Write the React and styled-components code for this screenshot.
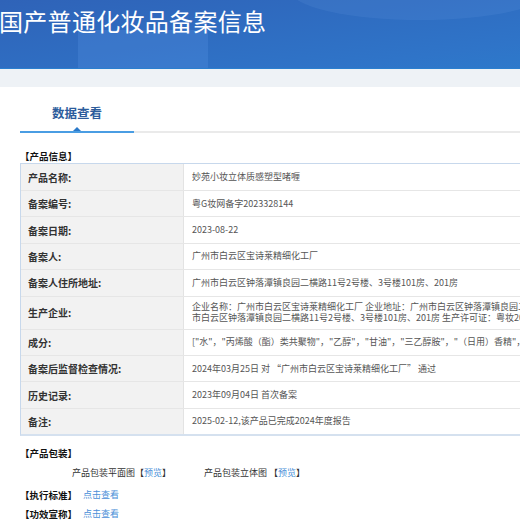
import React from "react";
import styled, { createGlobalStyle } from "styled-components";

const GlobalStyle = createGlobalStyle`
  html, body {
    margin: 0;
    padding: 0;
    background: #ffffff;
    overflow: hidden;
  }
  body {
    font-family: "Noto Sans CJK SC", "Noto Sans", "Liberation Sans", sans-serif;
  }
`;

const rows = [
  { label: "产品名称:", value: "妙苑小妆立体质感塑型啫喱" },
  { label: "备案编号:", value: "粤G妆网备字2023328144" },
  { label: "备案日期:", value: "2023-08-22" },
  { label: "备案人:", value: "广州市白云区宝诗莱精细化工厂" },
  { label: "备案人住所地址:", value: "广州市白云区钟落潭镇良园二横路11号2号楼、3号楼101房、201房" },
  {
    label: "生产企业:",
    lines: [
      "企业名称：广州市白云区宝诗莱精细化工厂 企业地址：广州市白云区钟落潭镇良园二横路11号2号楼、3号楼101房、201房 生产地址：广州",
      "市白云区钟落潭镇良园二横路11号2号楼、3号楼101房、201房 生产许可证：粤妆20160226",
    ],
  },
  {
    label: "成分:",
    value: "[\"水\"，\"丙烯酸（酯）类共聚物\"，\"乙醇\"，\"甘油\"，\"三乙醇胺\"，\"（日用）香精\"，\"DMDM乙内酰脲\"]",
  },
  { label: "备案后监督检查情况:", value: "2024年03月25日 对 “广州市白云区宝诗莱精细化工厂” 通过" },
  { label: "历史记录:", value: "2023年09月04日 首次备案" },
  { label: "备注:", value: "2025-02-12,该产品已完成2024年度报告" },
];

export default function App() {
  return (
    <Page>
      <GlobalStyle />
      <Banner>
        <Title>国产普通化妆品备案信息</Title>
      </Banner>
      <GrayBand />
      <Content>
        <TabBar>
          <Tab>数据查看</Tab>
        </TabBar>

        <SectionTitle $gap={16}>【产品信息】</SectionTitle>
        <Table>
          {rows.map((r) => (
            <Row key={r.label} $tall={!!r.lines}>
              <Label>{r.label}</Label>
              <Value $multi={!!r.lines}>
                {r.lines ? r.lines.map((l) => <div key={l}>{l}</div>) : r.value}
              </Value>
            </Row>
          ))}
        </Table>

        <SectionTitle $gap={10}>【产品包装】</SectionTitle>
        <Packages>
          <Pkg>
            产品包装平面图【<Link>预览</Link>】
          </Pkg>
          <Pkg>
            产品包装立体图 【<Link>预览</Link>】
          </Pkg>
        </Packages>
        <InfoList>
          <InfoLine>
            <Strong>【执行标准】</Strong>
            <Link>点击查看</Link>
          </InfoLine>
          <InfoLine>
            <Strong>【功效宣称】</Strong>
            <Link>点击查看</Link>
          </InfoLine>
        </InfoList>
      </Content>
    </Page>
  );
}

const Page = styled.div`
  width: 1000px;
`;

const Banner = styled.div`
  position: relative;
  height: 69px;
  overflow: hidden;
  background: linear-gradient(172deg, #2f63b8 0%, #2f74c8 55%, #2986d2 100%);
  border-bottom: 1px solid #2a7fcf;
  box-sizing: border-box;

  &::before {
    content: "";
    position: absolute;
    left: 78px;
    top: 30px;
    width: 130px;
    height: 45px;
    background: rgba(90, 150, 230, 0.25);
  }
  &::after {
    content: "";
    position: absolute;
    left: 290px;
    top: -40px;
    width: 260px;
    height: 60px;
    border-radius: 50%;
    background: rgba(120, 170, 235, 0.12);
  }
`;

const Title = styled.h1`
  position: relative;
  z-index: 1;
  margin: 0;
  padding: 4px 0 0 0;
  margin-left: -1px;
  font-size: 24px;
  line-height: 34px;
  font-weight: 400;
  color: #ffffff;
  letter-spacing: 0.3px;
`;

const GrayBand = styled.div`
  height: 18px;
  background: #eef2f6;
`;

const Content = styled.div`
  padding: 0 0 0 20px;
`;

const TabBar = styled.div`
  height: 46px;
  border-bottom: 2px solid #eaeaea;
  display: flex;
  box-sizing: border-box;
`;

const Tab = styled.div`
  position: relative;
  width: 114px;
  display: flex;
  align-items: center;
  justify-content: center;
  padding-top: 7px;
  font-size: 12.5px;
  font-weight: 700;
  color: #2c5c9c;
  margin-bottom: -2px;
  border-bottom: 2px solid #4a9de3;

  &::after {
    content: "";
    position: absolute;
    left: 50%;
    bottom: 0;
    margin-left: -4px;
    border-left: 4px solid transparent;
    border-right: 4px solid transparent;
    border-bottom: 4px solid #2a78c8;
  }
`;

const SectionTitle = styled.div`
  margin-top: ${(p) => p.$gap}px;
  height: 14px;
  line-height: 14px;
  font-size: 9.5px;
  font-weight: 700;
  color: #111;
`;

const Table = styled.div`
  border: 1px solid #c7d8ec;
  border-right: none;
  border-bottom-width: 2px;
  border-bottom-color: #d5e1ef;
`;

const Row = styled.div`
  display: flex;
  box-sizing: border-box;
  height: ${(p) => (p.$tall ? "33px" : "26.4px")};
  border-top: 1px solid #e6e6e6;
  &:first-child {
    border-top: none;
    height: 26px;
  }
`;

const Label = styled.div`
  width: 163px;
  flex: none;
  display: flex;
  align-items: center;
  padding-left: 7px;
  box-sizing: border-box;
  background: #f2f2f2;
  font-size: 10px;
  font-weight: 700;
  color: #333;
  border-right: 1px solid #e3e3e3;
`;

const Value = styled.div`
  flex: 1;
  display: flex;
  flex-direction: column;
  justify-content: center;
  padding-left: 8px;
  font-size: 9px;
  line-height: ${(p) => (p.$multi ? "10.5px" : "12px")};
  color: #555;
  white-space: nowrap;
  overflow: hidden;
`;

const Packages = styled.div`
  display: flex;
  padding: 4px 0 0 52px;
  gap: 33px;
  height: 16px;
  align-items: center;
`;

const Pkg = styled.div`
  font-size: 9px;
  color: #333;
`;

const Link = styled.span`
  font-size: 9px;
  color: #4a8fd8;
  font-weight: 400;
`;

const InfoList = styled.div`
  margin-top: 5px;
`;

const InfoLine = styled.div`
  display: flex;
  align-items: center;
  gap: 6px;
  height: 19px;
`;

const Strong = styled.span`
  font-size: 9.5px;
  font-weight: 700;
  color: #111;
`;
